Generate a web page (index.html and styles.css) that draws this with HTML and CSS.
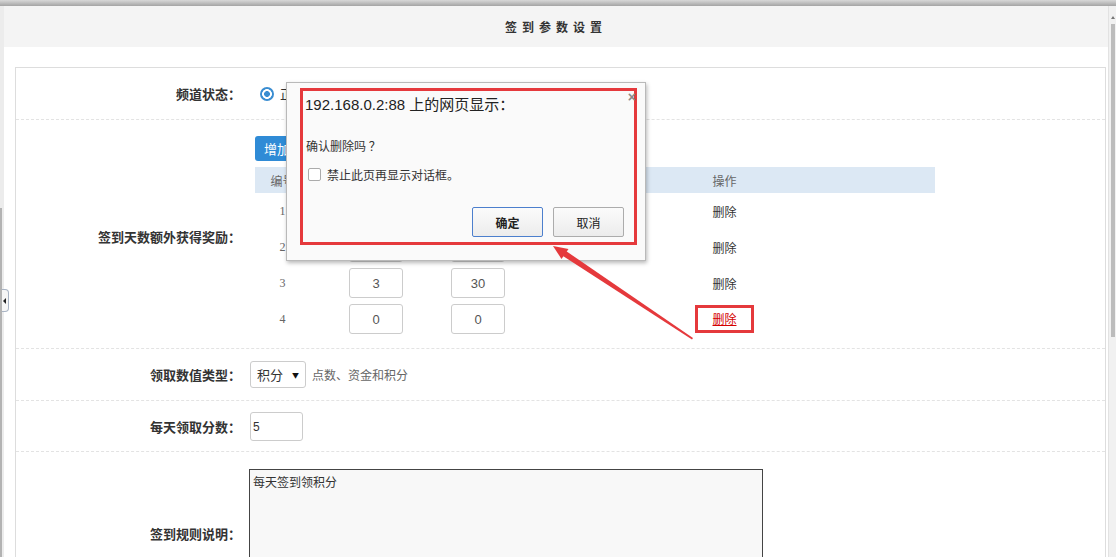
FILE: index.html
```html
<!DOCTYPE html>
<html lang="zh-CN">
<head>
    <meta charset="UTF-8">
    <title>签到参数设置</title>
    <link rel="stylesheet" href="styles.css">
</head>
<body>
    <div class="topline"></div>
    <div class="frame">
        <div class="rail"></div>
        <div class="main">
            <div class="title-bar">签到参数设置</div>
            <div class="panel">
                <!-- 频道状态 -->
                <div class="row row-status">
                    <div class="label">频道状态：</div>
                    <div class="field opts">
                        <span class="radio on"></span><span class="opt-text">正常</span>
                        <span class="radio"></span><span class="opt-text">关闭</span>
                    </div>
                </div>

                <!-- 奖励表 -->
                <div class="row row-reward">
                    <div class="label">签到天数额外获得奖励：</div>
                    <div class="field reward">
                        <button class="btn-add">增加一行</button>
                        <table class="reward-table">
                            <thead>
                                <tr>
                                    <th class="c1">编号</th>
                                    <th class="c2">签到天数</th>
                                    <th class="c3">奖励</th>
                                    <th class="c4">操作</th>
                                </tr>
                            </thead>
                            <tbody>
                                <tr>
                                    <td class="num">1</td>
                                    <td><input class="cell-input" value="1"></td>
                                    <td><input class="cell-input" value="10"></td>
                                    <td><a class="del">删除</a></td>
                                </tr>
                                <tr>
                                    <td class="num">2</td>
                                    <td><input class="cell-input" value="2"></td>
                                    <td><input class="cell-input" value="20"></td>
                                    <td><a class="del">删除</a></td>
                                </tr>
                                <tr>
                                    <td class="num">3</td>
                                    <td><input class="cell-input" value="3"></td>
                                    <td><input class="cell-input" value="30"></td>
                                    <td><a class="del">删除</a></td>
                                </tr>
                                <tr>
                                    <td class="num">4</td>
                                    <td><input class="cell-input" value="0"></td>
                                    <td><input class="cell-input" value="0"></td>
                                    <td><span class="mark"><a class="del active">删除</a></span></td>
                                </tr>
                            </tbody>
                        </table>
                    </div>
                </div>

                <!-- 领取数值类型 -->
                <div class="row row-type">
                    <div class="label">领取数值类型：</div>
                    <div class="field inline">
                        <div class="select">积分 <span class="caret">▼</span></div>
                        <span class="hint">点数、资金和积分</span>
                    </div>
                </div>

                <!-- 每天领取分数 -->
                <div class="row row-score">
                    <div class="label">每天领取分数：</div>
                    <div class="field">
                        <input class="score-input" value="5">
                    </div>
                </div>

                <!-- 签到规则说明 -->
                <div class="row row-rule">
                    <div class="label">签到规则说明：</div>
                    <div class="field">
                        <div class="rule-box">每天签到领积分</div>
                    </div>
                </div>
            </div>
        </div>
        <div class="scrollbar">
            <div class="scroll-arrow"></div>
            <div class="scroll-thumb"></div>
        </div>
    </div>

    <!-- 左侧折叠按钮 -->
    <div class="collapse-tab"><span class="tri"></span></div>

    <!-- 浏览器确认框 -->
    <div class="dialog">
        <span class="close">×</span>
        <div class="dialog-mark">
            <div class="dialog-title">192.168.0.2:88 上的网页显示：</div>
            <div class="dialog-msg">确认删除吗 ？</div>
            <label class="dialog-check"><span class="box"></span>禁止此页再显示对话框。</label>
            <div class="dialog-btns">
                <button class="dbtn primary">确定</button>
                <button class="dbtn">取消</button>
            </div>
        </div>
    </div>

    <!-- 标注箭头 -->
    <svg class="arrow" width="1116" height="557" viewBox="0 0 1116 557">
        <polygon points="693,338 692,339.5 563,256 566,251" fill="#e5393c"/>
        <polygon points="553,246 568.5,249 561.5,259" fill="#e5393c"/>
    </svg>
</body>
</html>
```

FILE: styles.css
```css
html, body {
    margin: 0;
    padding: 0;
    height: 100%;
    overflow: hidden;
}

body {
    background: #fff;
    font-family: "Noto Sans CJK SC", "Liberation Sans", sans-serif;
    font-size: 12px;
    color: #333;
    position: relative;
}

.topline {
    height: 6px;
    background: linear-gradient(#d8d8d8, #a4a4a4);
}

.frame {
    display: flex;
    height: calc(100% - 6px);
}

.rail {
    width: 4px;
    flex: none;
    background:
        linear-gradient(#ececec, #ececec) top left / 4px 202px no-repeat,
        linear-gradient(to right, #b3b3b3 2px, #ececec 2px);
}

.main {
    flex: 1;
    overflow: hidden;
}

.title-bar {
    height: 41px;
    line-height: 41px;
    background: #f4f4f4;
    text-align: center;
    font-weight: bold;
    letter-spacing: 5px;
    color: #333;
}

.panel {
    margin: 20px 2px 0 11px;
    border: 1px solid #ddd;
    border-bottom: none;
}

/* 每一行 */
.row {
    display: grid;
    grid-template-columns: 216px 1fr;
    column-gap: 18px;
    align-items: center;
    border-bottom: 1px dashed #e3e3e3;
}

.label {
    margin-right: -9px;
    text-align: right;
    font-weight: bold;
    font-size: 13px;
    line-height: 16px;
    color: #333;
}

.row-status { height: 51px; }
.row-reward { padding: 16px 0 11px; }
.row-type { padding: 12px 0; }
.row-score { padding: 11px 0 10px; }
.row-rule { padding: 17px 0; border-bottom: none; }

/* 频道状态 */
.opts {
    display: flex;
    align-items: center;
    padding-left: 10px;
}

.radio {
    width: 14px;
    height: 14px;
    border-radius: 50%;
    box-sizing: border-box;
    border: 1px solid #aaa;
    background: #fff;
}

.radio.on {
    border: none;
    background: radial-gradient(circle, #3a8dd1 0 2.6px, #fff 3.2px 4.6px, #3a8dd1 5.2px);
}

.opt-text {
    margin: 0 18px 0 6px;
    font-size: 13px;
}

/* 奖励表 */
.reward {
    padding-left: 5px;
}

.btn-add {
    display: block;
    height: 25px;
    padding: 0 9px;
    border: none;
    border-radius: 3px;
    background: #2f8bd6;
    color: #fff;
    font-family: inherit;
    font-size: 13px;
}

.reward-table {
    margin-top: 6px;
    width: 680px;
    border-collapse: collapse;
}

.reward-table th {
    height: 26px;
    background: #dce8f4;
    color: #666;
    font-weight: normal;
    font-size: 12px;
    text-align: center;
    padding: 0;
}

.reward-table .c1 { width: 55px; }
.reward-table .c2 { width: 132px; }
.reward-table .c3 { width: 72px; }

.reward-table td {
    height: 36px;
    padding: 0;
    text-align: center;
}

.reward-table .num {
    font-family: "Liberation Serif", serif;
    color: #666;
}

.cell-input {
    width: 54px;
    height: 30px;
    box-sizing: border-box;
    border: 1px solid #ccc;
    border-radius: 3px;
    text-align: center;
    font-family: "Liberation Sans", sans-serif;
    font-size: 13px;
    color: #555;
    vertical-align: middle;
}

.del {
    color: #333;
    text-decoration: none;
}

.del.active {
    color: #d40000;
    text-decoration: underline;
}

.mark {
    display: inline-block;
    border: 3px solid #e5393c;
    padding: 3px 14px;
    line-height: 16px;
    vertical-align: middle;
}

/* 下拉 */
.inline {
    display: flex;
    align-items: center;
}

.select {
    width: 56px;
    height: 27px;
    box-sizing: border-box;
    border: 1px solid #ccc;
    border-radius: 3px;
    padding-left: 6px;
    line-height: 25px;
    font-size: 13px;
    color: #333;
}

.caret {
    font-size: 7px;
    margin-left: 6px;
    vertical-align: 2px;
    color: #111;
}

.hint {
    margin-left: 6px;
    color: #666;
    font-size: 12px;
}

.score-input {
    display: block;
    width: 53px;
    height: 29px;
    box-sizing: border-box;
    border: 1px solid #ccc;
    border-radius: 3px;
    padding: 0 2px;
    font-family: "Liberation Sans", sans-serif;
    font-size: 12px;
    color: #333;
}

.rule-box {
    width: 514px;
    height: 130px;
    box-sizing: border-box;
    margin-left: -1px;
    border: 1px solid #444;
    background: #f8f8f8;
    padding: 3px 3px;
    font-size: 12px;
    color: #333;
}

/* 滚动条 */
.scrollbar {
    width: 8px;
    flex: none;
    background: #f1f1f1;
    border-left: 1px solid #e2e2e2;
    box-sizing: border-box;
}

.scroll-arrow {
    margin: 10px auto 0;
    width: 0;
    height: 0;
    border-left: 2px solid transparent;
    border-right: 2px solid transparent;
    border-bottom: 3px solid #777;
}

.scroll-thumb {
    margin: 5px 0 0 2px;
    width: 4px;
    height: 313px;
    background: #bcbcbc;
}

/* 左侧折叠 */
.collapse-tab {
    position: absolute;
    left: 2px;
    top: 289px;
    width: 7px;
    height: 23px;
    box-sizing: border-box;
    border: 1px solid #a9b4c4;
    border-left: none;
    border-radius: 0 4px 4px 0;
    background: #f6f6f6;
}

.collapse-tab .tri {
    position: absolute;
    left: 1px;
    top: 8px;
    border-top: 3px solid transparent;
    border-bottom: 3px solid transparent;
    border-right: 3px solid #222;
}

/* 对话框 */
.dialog {
    position: absolute;
    left: 286px;
    top: 82px;
    width: 360px;
    height: 179px;
    box-sizing: border-box;
    padding: 5px 8px 0 13px;
    background: #fafafa;
    border: 1px solid #b9b9b9;
    box-shadow: 1px 2px 4px rgba(0, 0, 0, 0.28);
}

.close {
    position: absolute;
    right: 9px;
    top: 7px;
    font-family: "Liberation Sans", sans-serif;
    font-size: 14px;
    font-weight: bold;
    line-height: 14px;
    color: #8a8a8a;
}

.dialog-mark {
    height: 157px;
    box-sizing: border-box;
    border: 3px solid #e5393c;
    padding: 3px 10px 0 2px;
}

.dialog-title {
    font-family: "Liberation Sans", "Noto Sans CJK SC", sans-serif;
    font-size: 15px;
    line-height: 22px;
    color: #222;
}

.dialog-msg {
    margin-top: 22px;
    padding-left: 1px;
    font-size: 12px;
    line-height: 16px;
    color: #333;
}

.dialog-check {
    display: flex;
    align-items: center;
    margin-top: 12px;
    padding-left: 3px;
    font-size: 12px;
    color: #333;
}

.dialog-check .box {
    width: 13px;
    height: 13px;
    box-sizing: border-box;
    border: 1px solid #ababab;
    border-radius: 2px;
    background: #fff;
    margin-right: 6px;
}

.dialog-btns {
    display: flex;
    justify-content: flex-end;
    gap: 10px;
    margin-top: 24px;
}

.dbtn {
    width: 71px;
    height: 30px;
    border: 1px solid #acacac;
    border-radius: 2px;
    background: linear-gradient(#fbfbfb, #ececec);
    font-family: inherit;
    font-size: 12px;
    color: #222;
}

.dbtn.primary {
    border-color: #4c7fcd;
    font-weight: bold;
}

.arrow {
    position: absolute;
    left: 0;
    top: 0;
    pointer-events: none;
}
```
